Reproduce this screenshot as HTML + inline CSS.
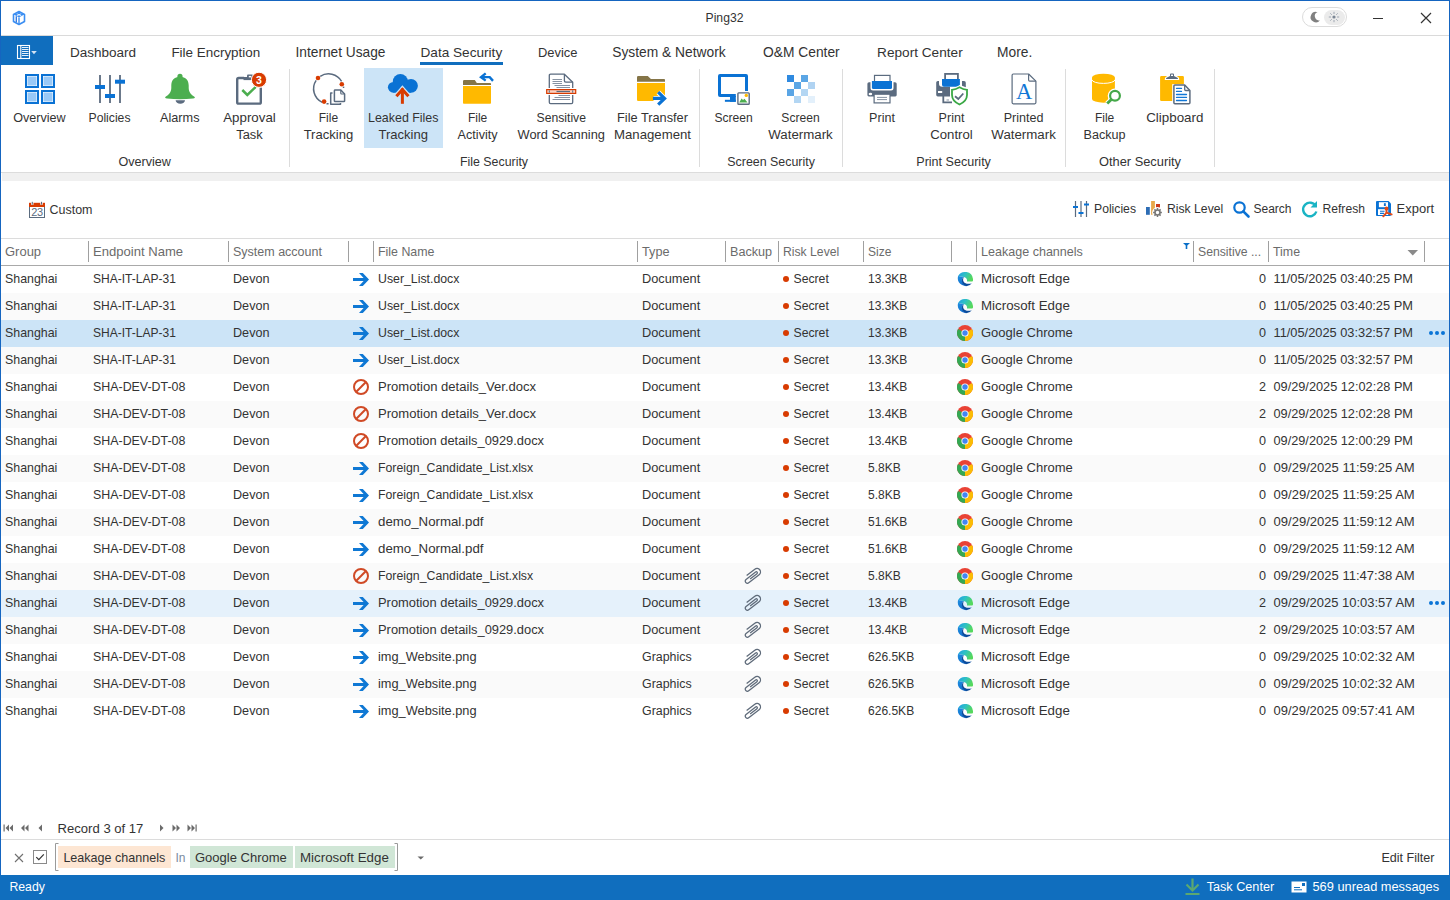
<!DOCTYPE html>
<html><head><meta charset="utf-8"><title>Ping32</title>
<style>
html,body{margin:0;padding:0;}
body{width:1450px;height:900px;overflow:hidden;position:relative;background:#fff;font-family:'Liberation Sans', sans-serif;}
.t{position:absolute;white-space:nowrap;}
.b{position:absolute;}
.i{position:absolute;overflow:visible;}
</style></head><body>

<svg class="i" style="left:12px;top:10px" width="14" height="16" viewBox="0 0 14 16"><path d="M1.8 4.6 L7 1.8 L12.2 4.6 L7 7.4 Z" fill="#3b8ef2"/><path d="M4.1 3.3 L9.5 6.1 M9.9 3.3 L4.5 6.1" stroke="#fff" stroke-width="0.8"/><path d="M7 1.5 L12.5 4.5 V11.5 L7 14.5 L1.5 11.5 V4.5 Z" fill="none" stroke="#3b8ef2" stroke-width="1.6" stroke-linejoin="round"/><path d="M7 7.4 V14.3" stroke="#3b8ef2" stroke-width="1.4"/><path d="M4.3 6.3 V12.2" stroke="#2f74dc" stroke-width="1.3"/></svg>
<div class="t" style="left:574.5px;width:300px;text-align:center;top:11.00px;font-size:12.17px;line-height:14px;color:#333;">Ping32</div>
<div class="b" style="left:1302px;top:7px;width:45px;height:20px;background:#fff;border:1px solid #dcdcdc;border-radius:11px;box-sizing:border-box;"></div>
<div class="b" style="left:1324px;top:10px;width:21px;height:15px;background:#ebebeb;border-radius:8px;"></div>
<svg class="i" style="left:1309px;top:11px" width="12" height="12" viewBox="0 0 12 12"><path d="M8.5 1.2 A5.2 5.2 0 1 0 11 9.2 A4.2 4.2 0 0 1 8.5 1.2 Z" fill="#808080"/></svg>
<svg class="i" style="left:1328px;top:11px" width="12" height="12" viewBox="0 0 12 12"><circle cx="6" cy="6" r="1.6" fill="#7b8694"/><g stroke="#8c96a3" stroke-width="0.8"><path d="M6 0.8V3 M6 9V11.2 M0.8 6H3 M9 6H11.2 M2.3 2.3L3.8 3.8 M8.2 8.2L9.7 9.7 M2.3 9.7L3.8 8.2 M8.2 3.8L9.7 2.3"/></g></svg>
<div class="b" style="left:1373px;top:18px;width:10px;height:1px;background:#333;"></div>
<svg class="i" style="left:1420px;top:12px" width="12" height="12" viewBox="0 0 12 12"><path d="M1 1 L11 11 M11 1 L1 11" stroke="#333" stroke-width="1.2"/></svg>
<div class="b" style="left:1px;top:35px;width:1448px;height:1px;background:#dadada;"></div>
<div class="b" style="left:0px;top:36px;width:53px;height:29px;background:#106ebe;"></div>
<svg class="i" style="left:16px;top:44px" width="22" height="16" viewBox="0 0 22 16"><rect x="1.5" y="1.5" width="12" height="13" fill="none" stroke="#fff" stroke-width="1.1"/><path d="M4.8 1.5 V14.5" stroke="#fff" stroke-width="1.1"/><g stroke="#fff" stroke-width="0.9"><path d="M6 3.5H12.5 M6 5.5H12.5 M6 7.5H12.5 M6 9.5H12.5 M6 11.5H12.5"/></g><path d="M15.2 7 H20.8 L18 10.2 Z" fill="#d5e3f3"/></svg>
<div class="t" style="left:70.0px;top:46.00px;font-size:13.53px;line-height:14px;color:#333;">Dashboard</div>
<div class="t" style="left:171.4px;top:46.00px;font-size:13.44px;line-height:14px;color:#333;">File Encryption</div>
<div class="t" style="left:295.5px;top:46.00px;font-size:13.72px;line-height:14px;color:#333;">Internet Usage</div>
<div class="t" style="left:420.5px;top:46.00px;font-size:13.61px;line-height:14px;color:#333;">Data Security</div>
<div class="t" style="left:538.0px;top:46.00px;font-size:12.92px;line-height:14px;color:#333;">Device</div>
<div class="t" style="left:612.2px;top:46.00px;font-size:13.8px;line-height:14px;color:#333;">System &amp; Network</div>
<div class="t" style="left:763.0px;top:46.00px;font-size:13.8px;line-height:14px;color:#333;">O&amp;M Center</div>
<div class="t" style="left:877.1px;top:46.00px;font-size:13.64px;line-height:14px;color:#333;">Report Center</div>
<div class="t" style="left:997.0px;top:46.00px;font-size:13.8px;line-height:14px;color:#333;">More.</div>
<div class="b" style="left:420px;top:62px;width:83px;height:3px;background:#106ebe;"></div>
<div class="b" style="left:364px;top:68px;width:79px;height:80px;background:#cce4f7;"></div>
<div class="b" style="left:289px;top:69px;width:1px;height:98px;background:#dcdcdc;"></div>
<div class="b" style="left:699px;top:69px;width:1px;height:98px;background:#dcdcdc;"></div>
<div class="b" style="left:842px;top:69px;width:1px;height:98px;background:#dcdcdc;"></div>
<div class="b" style="left:1065px;top:69px;width:1px;height:98px;background:#dcdcdc;"></div>
<div class="b" style="left:1214px;top:69px;width:1px;height:98px;background:#dcdcdc;"></div>
<div class="t" style="left:-110.5px;width:300px;text-align:center;top:111.00px;font-size:12.59px;line-height:14px;color:#333;">Overview</div>
<div class="t" style="left:-40.5px;width:300px;text-align:center;top:111.00px;font-size:12.19px;line-height:14px;color:#333;">Policies</div>
<div class="t" style="left:29.75px;width:300px;text-align:center;top:111.00px;font-size:12.7px;line-height:14px;color:#333;">Alarms</div>
<div class="t" style="left:99.5px;width:300px;text-align:center;top:111.00px;font-size:13.3px;line-height:14px;color:#333;">Approval</div>
<div class="t" style="left:99.5px;width:300px;text-align:center;top:128.00px;font-size:12.88px;line-height:14px;color:#333;">Task</div>
<div class="t" style="left:178.39999999999998px;width:300px;text-align:center;top:111.00px;font-size:12.0px;line-height:14px;color:#333;">File</div>
<div class="t" style="left:178.39999999999998px;width:300px;text-align:center;top:128.00px;font-size:13.04px;line-height:14px;color:#333;">Tracking</div>
<div class="t" style="left:253.25px;width:300px;text-align:center;top:111.00px;font-size:12.43px;line-height:14px;color:#333;">Leaked Files</div>
<div class="t" style="left:253.25px;width:300px;text-align:center;top:128.00px;font-size:13.04px;line-height:14px;color:#333;">Tracking</div>
<div class="t" style="left:327.6px;width:300px;text-align:center;top:111.00px;font-size:12.0px;line-height:14px;color:#333;">File</div>
<div class="t" style="left:327.6px;width:300px;text-align:center;top:128.00px;font-size:12.63px;line-height:14px;color:#333;">Activity</div>
<div class="t" style="left:411.25px;width:300px;text-align:center;top:111.00px;font-size:12.2px;line-height:14px;color:#333;">Sensitive</div>
<div class="t" style="left:411.25px;width:300px;text-align:center;top:128.00px;font-size:12.83px;line-height:14px;color:#333;">Word Scanning</div>
<div class="t" style="left:502.5px;width:300px;text-align:center;top:111.00px;font-size:12.78px;line-height:14px;color:#333;">File Transfer</div>
<div class="t" style="left:502.5px;width:300px;text-align:center;top:128.00px;font-size:13.19px;line-height:14px;color:#333;">Management</div>
<div class="t" style="left:583.6px;width:300px;text-align:center;top:111.00px;font-size:12.09px;line-height:14px;color:#333;">Screen</div>
<div class="t" style="left:650.5px;width:300px;text-align:center;top:111.00px;font-size:12.09px;line-height:14px;color:#333;">Screen</div>
<div class="t" style="left:650.5px;width:300px;text-align:center;top:128.00px;font-size:13.29px;line-height:14px;color:#333;">Watermark</div>
<div class="t" style="left:732px;width:300px;text-align:center;top:111.00px;font-size:12.55px;line-height:14px;color:#333;">Print</div>
<div class="t" style="left:801.5px;width:300px;text-align:center;top:111.00px;font-size:12.55px;line-height:14px;color:#333;">Print</div>
<div class="t" style="left:801.5px;width:300px;text-align:center;top:128.00px;font-size:13.18px;line-height:14px;color:#333;">Control</div>
<div class="t" style="left:873.6px;width:300px;text-align:center;top:111.00px;font-size:12.56px;line-height:14px;color:#333;">Printed</div>
<div class="t" style="left:873.6px;width:300px;text-align:center;top:128.00px;font-size:13.29px;line-height:14px;color:#333;">Watermark</div>
<div class="t" style="left:954.5999999999999px;width:300px;text-align:center;top:111.00px;font-size:12.0px;line-height:14px;color:#333;">File</div>
<div class="t" style="left:954.5999999999999px;width:300px;text-align:center;top:128.00px;font-size:12.62px;line-height:14px;color:#333;">Backup</div>
<div class="t" style="left:1024.8px;width:300px;text-align:center;top:111.00px;font-size:13.39px;line-height:14px;color:#333;">Clipboard</div>
<div class="t" style="left:-5.25px;width:300px;text-align:center;top:155.00px;font-size:12.59px;line-height:14px;color:#333;">Overview</div>
<div class="t" style="left:344px;width:300px;text-align:center;top:155.00px;font-size:12.36px;line-height:14px;color:#333;">File Security</div>
<div class="t" style="left:621.1px;width:300px;text-align:center;top:155.00px;font-size:12.41px;line-height:14px;color:#333;">Screen Security</div>
<div class="t" style="left:803.6px;width:300px;text-align:center;top:155.00px;font-size:12.56px;line-height:14px;color:#333;">Print Security</div>
<div class="t" style="left:990px;width:300px;text-align:center;top:155.00px;font-size:12.83px;line-height:14px;color:#333;">Other Security</div>
<svg class="i" style="left:25px;top:74px" width="30" height="30" viewBox="0 0 30 30"><rect x="1" y="1" width="12" height="12" fill="#fff" stroke="#0a72d4" stroke-width="2"/><rect x="2.5" y="2.5" width="9" height="9" fill="#99c9f7"/><rect x="1" y="17" width="12" height="12" fill="#fff" stroke="#0a72d4" stroke-width="2"/><rect x="2.5" y="18.5" width="9" height="9" fill="#99c9f7"/><rect x="17" y="1" width="12" height="12" fill="#fff" stroke="#0a72d4" stroke-width="2"/><rect x="18.5" y="2.5" width="9" height="9" fill="#99c9f7"/><rect x="17" y="17" width="12" height="12" fill="#fff" stroke="#0a72d4" stroke-width="2"/><rect x="18.5" y="18.5" width="9" height="9" fill="#99c9f7"/></svg>
<svg class="i" style="left:95px;top:75px" width="30" height="29" viewBox="0 0 30 29"><g stroke="#5b6b7f" stroke-width="1.8"><path d="M5 0V28 M15 0V28 M25 0V28"/></g><g fill="#0a72d4"><rect x="0" y="10" width="10" height="4"/><rect x="10" y="19" width="10" height="4"/><rect x="20" y="4.7" width="10" height="4"/></g></svg>
<svg class="i" style="left:165px;top:74px" width="30" height="30" viewBox="0 0 30 30"><circle cx="15" cy="2.4" r="2.6" fill="#4cae4f"/><path d="M15 2.8 C9 2.8 6.3 6.5 6.3 11.5 V14 C6.3 18.5 3.5 21 0 23.2 Q0.5 24.3 2 24.6 Q15 26 28 24.6 Q29.5 24.3 30 23.2 C26.5 21 23.7 18.5 23.7 14 V11.5 C23.7 6.5 21 2.8 15 2.8 Z" fill="#4cae4f"/><path d="M10.6 26.2 H20 A4.7 3.5 0 0 1 10.6 26.2 Z" fill="#5b6b7f"/></svg>
<svg class="i" style="left:235px;top:72px" width="34" height="34" viewBox="0 0 34 34"><path d="M9 6 H3.8 Q2.2 6 2.2 7.6 V30.2 Q2.2 31.6 3.6 31.6 H24.4 Q25.8 31.6 25.8 30.2 V15.5" fill="none" stroke="#5b6b7f" stroke-width="2.4"/><path d="M8.5 5 H20.5 V8.1 H8.5 Z" fill="#5b6b7f"/><path d="M12 6 V3.6 Q12 2.6 13 2.6 H17 Q18 2.6 18 3.6 V6 Z" fill="#5b6b7f"/><rect x="13.8" y="3.9" width="2.4" height="1.5" fill="#fff"/><path d="M7.3 18 L12.3 22.9 L20.8 14.8" fill="none" stroke="#4cae4f" stroke-width="2.5"/><circle cx="24" cy="7.8" r="7.6" fill="#d83b01" stroke="#fff" stroke-width="1"/><text x="24" y="11.5" font-size="10.5" font-weight="bold" fill="#fff" text-anchor="middle" font-family="Liberation Sans">3</text></svg>
<svg class="i" style="left:308px;top:68px" width="42" height="40" viewBox="0 0 42 40"><path d="M12.21 8.36 A15 15 0 0 1 33.59 13.30 M35.45 18.71 A15 15 0 0 1 35.60 20.54 M8.16 12.41 A15 15 0 0 0 14.26 34.39 M18.51 35.65 A15 15 0 0 0 20.60 35.80" fill="none" stroke="#5b6b7f" stroke-width="1.5"/><circle cx="10" cy="10" r="2.3" fill="#d83b01"/><circle cx="33.8" cy="16.2" r="2.3" fill="#d83b01"/><circle cx="16.1" cy="33.6" r="2.3" fill="#d83b01"/><rect x="21" y="20" width="20" height="20" fill="#fff"/><path d="M24.5 25 H22.7 V36.2 H32.5 V35" fill="none" stroke="#5b6b7f" stroke-width="1.5" stroke-linejoin="round"/><path d="M27.1 22 H32.8 L36.6 26 V32.9 Q36.6 33.6 35.9 33.6 H27.1 Q26.4 33.6 26.4 32.9 V22.7 Q26.4 22 27.1 22 Z" fill="#fff" stroke="#5b6b7f" stroke-width="1.5" stroke-linejoin="round"/><path d="M32.8 22 V25.3 Q32.8 26 33.5 26 H36.6" fill="none" stroke="#5b6b7f" stroke-width="1.2"/></svg>
<svg class="i" style="left:386px;top:72px" width="34" height="34" viewBox="0 0 34 34"><g fill="#0a72d4"><circle cx="14.4" cy="9.5" r="7.6"/><circle cx="25" cy="13.8" r="6.9"/><circle cx="7.3" cy="15.3" r="5.4"/><rect x="7.3" y="9.5" width="17.7" height="11.2"/></g><g fill="none" stroke="#cce4f7" stroke-width="5.5"><path d="M10.4 24.2 L16.4 17.4 L22.4 24.2 M16.4 17.6 V31.8"/></g><g fill="none" stroke="#d83b01" stroke-width="3"><path d="M10.4 24.2 L16.4 17.4 L22.4 24.2"/><path d="M16.4 16.5 V31.8"/></g></svg>
<svg class="i" style="left:462px;top:72px" width="34" height="34" viewBox="0 0 34 34"><path d="M1 9.2 Q1 8 2.2 8 H12.8 L14.8 11.1 H28.2 Q29 11.1 29 11.9 V12.9 H1 Z" fill="#857548"/><path d="M1 14 H29 V31 Q29 31.8 28.2 31.8 H1.8 Q1 31.8 1 31 Z" fill="#ffb900"/><path d="M23.7 1.4 L19 5.1 L23.7 8.6 M19 5.1 H27.7 L31 8.9" fill="none" stroke="#0a72d4" stroke-width="2.4"/></svg>
<svg class="i" style="left:545px;top:72px" width="34" height="34" viewBox="0 0 34 34"><path d="M4.3 3.5 Q4.3 2.2 5.6 2.2 H19.4 L27.7 10.2 V30.3 Q27.7 31.6 26.4 31.6 H5.6 Q4.3 31.6 4.3 30.3 Z" fill="#fff" stroke="#5b6b7f" stroke-width="1.3" stroke-linejoin="round"/><path d="M19.4 2.2 V8.8 Q19.4 10.2 20.8 10.2 H27.7" fill="none" stroke="#5b6b7f" stroke-width="1.3"/><g stroke="#8793a3" stroke-width="1"><path d="M7.5 7.5 H17 M7.5 9.5 H17 M7.5 11.5 H17 M9.5 13.5 H25 M11.5 15.5 H25 M13.5 23.5 H25 M9.5 25.5 H25 M7.5 27.5 H25"/></g><rect x="0.5" y="16" width="31" height="7" fill="#fff"/><rect x="1.7" y="17.6" width="29" height="3.8" fill="#fcd3c2" stroke="#d83b01" stroke-width="1.2"/><path d="M11.5 19.5 H25" stroke="#5b6b7f" stroke-width="1.2"/><path d="M4.3 18.3 V20.7 M27.7 18.3 V20.7" stroke="#5b6b7f" stroke-width="1"/></svg>
<svg class="i" style="left:636px;top:74px" width="34" height="34" viewBox="0 0 34 34"><path d="M1 3.2 Q1 2 2.2 2 H11.8 L14.9 5.1 H28.2 Q29 5.1 29 5.9 V7.8 H1 Z" fill="#857548"/><path d="M1 9.1 H29 V26.1 Q29 26.9 28.2 26.9 H1.8 Q1 26.9 1 26.1 Z" fill="#ffb900"/><g fill="none" stroke="#fff" stroke-width="5"><path d="M17.5 24.4 H28 M22.2 18.2 L28.6 24.4 L22.2 30.7"/></g><g fill="none" stroke="#0a72d4" stroke-width="3.2"><path d="M16.9 24.4 H28 M22.2 18.2 L28.6 24.4 L22.2 30.7"/></g></svg>
<svg class="i" style="left:716px;top:72px" width="36" height="36" viewBox="0 0 36 36"><path fill-rule="evenodd" fill="#0a72d4" d="M4 2 H30 Q32 2 32 4 V18.9 H29 V5 H5 V22 H19.8 V24.9 H4 Q2 24.9 2 22.9 V4 Q2 2 4 2 Z"/><rect x="14" y="24" width="5.8" height="5.8" fill="#0a72d4"/><rect x="8.9" y="27.8" width="10.9" height="2" fill="#0a72d4"/><rect x="21.9" y="20.9" width="11.3" height="11.3" rx="0.8" fill="#fff" stroke="#5b6b7f" stroke-width="1.4"/><path d="M23.2 30.5 L25.6 26.5 L27 28 L28.5 26.8 L31.5 30.5 Z" fill="#4cae4f"/><circle cx="30.3" cy="23.4" r="1.7" fill="#ffb900"/></svg>
<svg class="i" style="left:787px;top:75px" width="28" height="28" viewBox="0 0 28 28"><rect x="0" y="0" width="7" height="7" fill="#2f8ae0"/><rect x="14" y="0" width="7" height="7" fill="#5ba6e5"/><rect x="7" y="7" width="7" height="7" fill="#5ba6e5"/><rect x="21" y="7" width="7" height="7" fill="#b0d3f2"/><rect x="0" y="14" width="7" height="7" fill="#5aa5e5"/><rect x="14" y="14" width="7" height="7" fill="#b3d6f3"/><rect x="7" y="21" width="7" height="7" fill="#b3d6f3"/><rect x="21" y="21" width="7" height="7" fill="#e3f0fb"/></svg>
<svg class="i" style="left:866px;top:74px" width="32" height="31" viewBox="0 0 32 31"><rect x="8.5" y="1.4" width="15.5" height="8" fill="#fff" stroke="#5b6b7f" stroke-width="1.2"/><path d="M1.4 9.8 Q1.4 8.2 3 8.2 H4.5 V14 Q4.5 16.5 7 16.5 H25 Q27.5 16.5 27.5 14 V8.2 H29 Q30.7 8.2 30.7 9.8 V21 Q30.7 22.4 29.3 22.4 H2.8 Q1.4 22.4 1.4 21 Z" fill="#5b6b7f"/><path d="M5.9 6.9 H26 V13.4 Q26 14.9 24.5 14.9 H7.4 Q5.9 14.9 5.9 13.4 Z" fill="#0a72d4"/><ellipse cx="4.4" cy="20" rx="1.8" ry="1.3" fill="#fff"/><rect x="8.1" y="20.2" width="15.9" height="8.7" fill="#fff" stroke="#5b6b7f" stroke-width="1.2"/><path d="M11 23.4 H21 M11 25.6 H21" stroke="#8793a3" stroke-width="1"/></svg>
<svg class="i" style="left:935px;top:72px" width="34" height="34" viewBox="0 0 34 34"><rect x="10.1" y="1.9" width="12.8" height="7" fill="#fff" stroke="#5b6b7f" stroke-width="1.8"/><path d="M1.2 10.5 Q1.2 8.9 2.8 8.9 H4 V11.5 Q4 14.7 7.2 14.7 H15 V24.4 H2.8 Q1.2 24.4 1.2 22.8 Z" fill="#5b6b7f"/><path d="M27 8.9 H29 Q30.8 8.9 30.8 10.7 V15.3 L27 13.8 Z" fill="#5b6b7f"/><path d="M7 6.9 H24.9 V13 L22.5 14.7 H9 Q7 14.7 7 12.7 Z" fill="#0a72d4"/><rect x="3" y="19" width="4.2" height="2" fill="#fff"/><path d="M8.3 21 V30.4 H17" fill="none" stroke="#5b6b7f" stroke-width="1.8"/><path d="M11.5 28 H14" stroke="#8793a3" stroke-width="1"/><path d="M24.5 15.3 Q21 17.5 17 17.8 V23 Q17 29 24.5 32.5 Q32 29 32 23 V17.8 Q28 17.5 24.5 15.3 Z" fill="#fff" stroke="#fff" stroke-width="3.5"/><path d="M24.5 15.3 Q21 17.5 17 17.8 V23 Q17 29 24.5 32.5 Q32 29 32 23 V17.8 Q28 17.5 24.5 15.3 Z" fill="#fff" stroke="#3aa845" stroke-width="1.8"/><path d="M20 24.2 L23.3 27 L28.3 21.5" fill="none" stroke="#5b6b7f" stroke-width="1.8"/></svg>
<svg class="i" style="left:1010px;top:72px" width="30" height="34" viewBox="0 0 30 34"><path d="M2.1 3.2 Q2.1 2 3.3 2 H18.6 L25.9 9.1 V30.6 Q25.9 31.8 24.7 31.8 H3.3 Q2.1 31.8 2.1 30.6 Z" fill="#fff" stroke="#5b6b7f" stroke-width="1.2" stroke-linejoin="round"/><path d="M18.6 2 V7.9 Q18.6 9.1 19.8 9.1 H25.9" fill="none" stroke="#5b6b7f" stroke-width="1.2"/><text x="14" y="26.7" font-size="22.5" fill="#1177d6" text-anchor="middle" font-family="Liberation Serif">A</text></svg>
<svg class="i" style="left:1091px;top:72px" width="34" height="34" viewBox="0 0 34 34"><path d="M1 5.4 V27 A11.45 3.7 0 0 0 23.9 27 V5.4 Z" fill="#ffb900"/><ellipse cx="12.45" cy="5.4" rx="11.45" ry="3.6" fill="#ffb900"/><path d="M1 7.8 A11.45 3.6 0 0 0 23.9 7.8" fill="none" stroke="#fff" stroke-width="1"/><circle cx="24" cy="23.8" r="7.3" fill="#fff"/><path d="M20.6 27.2 L16.2 31.6" stroke="#fff" stroke-width="5"/><circle cx="24" cy="23.8" r="4.9" fill="#fff" stroke="#45a84a" stroke-width="2.2"/><path d="M20.6 27.2 L16.2 31.6" stroke="#45a84a" stroke-width="2.8"/></svg>
<svg class="i" style="left:1159px;top:72px" width="34" height="34" viewBox="0 0 34 34"><rect x="1.1" y="4" width="23.8" height="24.9" rx="1.2" fill="#ffb900"/><path d="M7 6.9 Q7 6 8 5.5 L11 4 V2.5 Q11 1.6 12 1.6 H14 Q15 1.6 15 2.5 V4 L18 5.5 Q19 6 19 6.9 Z" fill="#fff" stroke="#fff" stroke-width="2.4"/><path d="M7 6.9 Q7 6 8 5.5 L11 4 V2.5 Q11 1.6 12 1.6 H14 Q15 1.6 15 2.5 V4 L18 5.5 Q19 6 19 6.9 Z" fill="#5b6b7f"/><rect x="12" y="2.6" width="2" height="1.4" fill="#fff"/><rect x="13.2" y="12.1" width="18.7" height="20.7" fill="#fff"/><path d="M14.9 14.1 Q14.9 13.1 15.9 13.1 H25.7 L30.9 18.5 V30.8 Q30.9 31.8 29.9 31.8 H15.9 Q14.9 31.8 14.9 30.8 Z" fill="#fff" stroke="#5b6b7f" stroke-width="1.5" stroke-linejoin="round"/><path d="M25.7 13.1 V17.5 Q25.7 18.5 26.7 18.5 H30.9" fill="none" stroke="#5b6b7f" stroke-width="1.3"/><g stroke="#1177d6" stroke-width="1.3" stroke-linecap="round"><path d="M17.5 16.4 H22.5 M17.5 19.4 H22.5 M17.5 22.5 H27.5 M17.5 25.4 H27.5 M17.5 28.5 H27.5"/></g></svg>
<div class="b" style="left:1px;top:172px;width:1448px;height:1px;background:#dcdcdc;"></div>
<div class="b" style="left:2px;top:173px;width:1447px;height:8px;background:#f0f0f0;"></div>
<svg class="i" style="left:28px;top:200px" width="18" height="19" viewBox="0 0 18 19"><rect x="1.5" y="3.5" width="15" height="14" fill="#fff" stroke="#5b6b7f" stroke-width="1"/><rect x="1" y="2.8" width="16" height="4.2" fill="#d83b01"/><rect x="3.1" y="2.2" width="2.4" height="2.6" fill="#fff"/><rect x="12.3" y="2.2" width="2.4" height="2.6" fill="#fff"/><path d="M4.3 1.8V4.6 M13.5 1.8V4.6" stroke="#5b6b7f" stroke-width="1"/><text x="9.1" y="15.9" font-size="11" fill="#5b6b7f" text-anchor="middle" font-family="Liberation Sans" letter-spacing="-0.3">23</text></svg>
<svg class="i" style="left:1073px;top:201px" width="16" height="16" viewBox="0 0 16 16"><g stroke="#5b6b7f" stroke-width="1.2"><path d="M2.5 0V16 M8 0V16 M13.5 0V16"/></g><g fill="#0a72d4"><rect x="0" y="5" width="5" height="2"/><rect x="5.5" y="11" width="5" height="2"/><rect x="11" y="2.5" width="5" height="2"/></g></svg>
<svg class="i" style="left:1146px;top:200px" width="17" height="18" viewBox="0 0 17 18"><rect x="0" y="7" width="3.8" height="7.8" fill="#2d6db5"/><rect x="5.1" y="1" width="3.8" height="13.8" fill="#e8a94a"/><rect x="10" y="4" width="4" height="3.8" fill="#cc3a1a"/><circle cx="11.5" cy="12.5" r="5.4" fill="#fff"/><path d="M13.90 12.50 L15.90 12.50 M13.20 14.20 L14.61 15.61 M11.50 14.90 L11.50 16.90 M9.80 14.20 L8.39 15.61 M9.10 12.50 L7.10 12.50 M9.80 10.80 L8.39 9.39 M11.50 10.10 L11.50 8.10 M13.20 10.80 L14.61 9.39" stroke="#777" stroke-width="1.5"/><circle cx="11.5" cy="12.5" r="2.5" fill="#fff" stroke="#777" stroke-width="1.6"/></svg>
<svg class="i" style="left:1233px;top:201px" width="17" height="17" viewBox="0 0 17 17"><circle cx="6.5" cy="6.5" r="5.2" fill="none" stroke="#0a72d4" stroke-width="2.2"/><path d="M10.3 10.3 L15.5 15.5" stroke="#0a72d4" stroke-width="2.6" stroke-linecap="round"/></svg>
<svg class="i" style="left:1301px;top:200px" width="18" height="18" viewBox="0 0 18 18"><path d="M14.8 6 A6.8 6.8 0 1 0 15.4 11.5" fill="none" stroke="#1ab4c4" stroke-width="2.4"/><path d="M16 1 V7.5 H9.5 Z" fill="#1ab4c4"/></svg>
<svg class="i" style="left:1376px;top:201px" width="18" height="18" viewBox="0 0 18 18"><path d="M0 1 Q0 0 1 0 H12.5 L15 2.5 V14 Q15 15 14 15 H1 Q0 15 0 14 Z" fill="#0a72d4"/><rect x="2.9" y="1.2" width="9.1" height="5" fill="#fff"/><rect x="7.9" y="2.2" width="1.9" height="2.8" fill="#0a72d4"/><rect x="2" y="8.2" width="10.2" height="5.8" fill="#fff"/><path d="M4 10.3 H8.6 M4 12.4 H8" stroke="#0a72d4" stroke-width="1.1"/><g stroke="#e04a1a" stroke-width="2" fill="none" stroke-linecap="round"><path d="M10.5 8.3 V11.6 L7.3 15.3 M10.5 11.6 L15.6 13.4"/><circle cx="10.5" cy="7.6" r="1"/></g></svg>
<div class="t" style="left:49.5px;top:203.00px;font-size:12.48px;line-height:14px;color:#333;">Custom</div>
<div class="t" style="left:1094.0px;top:202.00px;font-size:12.19px;line-height:14px;color:#333;">Policies</div>
<div class="t" style="left:1167.0px;top:202.00px;font-size:12.2px;line-height:14px;color:#333;">Risk Level</div>
<div class="t" style="left:1253.5px;top:202.00px;font-size:12.0px;line-height:14px;color:#333;">Search</div>
<div class="t" style="left:1322.5px;top:202.00px;font-size:12.14px;line-height:14px;color:#333;">Refresh</div>
<div class="t" style="left:1396.6px;top:202.00px;font-size:12.98px;line-height:14px;color:#333;">Export</div>
<div class="b" style="left:1px;top:238px;width:1448px;height:1px;background:#dcdcdc;"></div>
<div class="b" style="left:1px;top:265px;width:1448px;height:1px;background:#a9a9a9;"></div>
<div class="b" style="left:88px;top:241px;width:1px;height:21px;background:#a0a0a0;"></div>
<div class="b" style="left:228px;top:241px;width:1px;height:21px;background:#a0a0a0;"></div>
<div class="b" style="left:348px;top:241px;width:1px;height:21px;background:#a0a0a0;"></div>
<div class="b" style="left:373px;top:241px;width:1px;height:21px;background:#a0a0a0;"></div>
<div class="b" style="left:637px;top:241px;width:1px;height:21px;background:#a0a0a0;"></div>
<div class="b" style="left:725px;top:241px;width:1px;height:21px;background:#a0a0a0;"></div>
<div class="b" style="left:778px;top:241px;width:1px;height:21px;background:#a0a0a0;"></div>
<div class="b" style="left:863px;top:241px;width:1px;height:21px;background:#a0a0a0;"></div>
<div class="b" style="left:951px;top:241px;width:1px;height:21px;background:#a0a0a0;"></div>
<div class="b" style="left:976px;top:241px;width:1px;height:21px;background:#a0a0a0;"></div>
<div class="b" style="left:1193px;top:241px;width:1px;height:21px;background:#a0a0a0;"></div>
<div class="b" style="left:1268px;top:241px;width:1px;height:21px;background:#a0a0a0;"></div>
<div class="b" style="left:1424px;top:241px;width:1px;height:21px;background:#a0a0a0;"></div>
<div class="t" style="left:5.0px;top:245.00px;font-size:12.99px;line-height:14px;color:#6b6b6b;">Group</div>
<div class="t" style="left:93.0px;top:245.00px;font-size:13.07px;line-height:14px;color:#6b6b6b;">Endpoint Name</div>
<div class="t" style="left:233.0px;top:245.00px;font-size:12.5px;line-height:14px;color:#6b6b6b;">System account</div>
<div class="t" style="left:378.0px;top:245.00px;font-size:12.4px;line-height:14px;color:#6b6b6b;">File Name</div>
<div class="t" style="left:642.0px;top:245.00px;font-size:12.68px;line-height:14px;color:#6b6b6b;">Type</div>
<div class="t" style="left:730.0px;top:245.00px;font-size:12.62px;line-height:14px;color:#6b6b6b;">Backup</div>
<div class="t" style="left:783.0px;top:245.00px;font-size:12.2px;line-height:14px;color:#6b6b6b;">Risk Level</div>
<div class="t" style="left:868.0px;top:245.00px;font-size:12.0px;line-height:14px;color:#6b6b6b;">Size</div>
<div class="t" style="left:981.0px;top:245.00px;font-size:12.56px;line-height:14px;color:#6b6b6b;">Leakage channels</div>
<div class="t" style="left:1198.0px;top:245.00px;font-size:12.21px;line-height:14px;color:#6b6b6b;">Sensitive ...</div>
<div class="t" style="left:1273.0px;top:245.00px;font-size:12.4px;line-height:14px;color:#6b6b6b;">Time</div>
<svg class="i" style="left:1183px;top:243px" width="7" height="6" viewBox="0 0 7 6"><path d="M0 0 H7 L4.3 2.6 V6 H2.7 V2.6 Z" fill="#0a6fc8"/></svg>
<svg class="i" style="left:1407px;top:250px" width="12" height="6" viewBox="0 0 12 6"><path d="M0.5 0 H11 L5.75 5.5 Z" fill="#8a8a8a"/></svg>
<div class="t" style="left:5.0px;top:272.00px;font-size:12.38px;line-height:14px;color:#333;">Shanghai</div>
<div class="t" style="left:93.0px;top:272.00px;font-size:12.04px;line-height:14px;color:#333;">SHA-IT-LAP-31</div>
<div class="t" style="left:233.0px;top:272.00px;font-size:12.63px;line-height:14px;color:#333;">Devon</div>
<svg class="i" style="left:353px;top:271px" width="16" height="16"><use href="#arrow"/></svg>
<div class="t" style="left:378.0px;top:272.00px;font-size:12.32px;line-height:14px;color:#333;">User_List.docx</div>
<div class="t" style="left:642.0px;top:272.00px;font-size:12.79px;line-height:14px;color:#333;">Document</div>
<div class="b" style="left:783px;top:276px;width:6px;height:6px;background:#d83b01;border-radius:50%;"></div>
<div class="t" style="left:793.5px;top:272.00px;font-size:12.21px;line-height:14px;color:#333;">Secret</div>
<div class="t" style="left:868.0px;top:272.00px;font-size:12.0px;line-height:14px;color:#333;">13.3KB</div>
<svg class="i" style="left:957px;top:271px" width="16" height="16"><use href="#edge"/></svg>
<div class="t" style="left:981.0px;top:272.00px;font-size:13.32px;line-height:14px;color:#333;">Microsoft Edge</div>
<div class="t" style="left:966px;width:300px;text-align:right;top:272.00px;font-size:12.6px;line-height:14px;color:#333;">0</div>
<div class="t" style="left:1273.5px;top:272.00px;font-size:12.82px;line-height:14px;color:#333;">11/05/2025 03:40:25 PM</div>
<div class="b" style="left:1px;top:293px;width:1448px;height:27px;background:#fafafa;"></div>
<div class="t" style="left:5.0px;top:299.00px;font-size:12.38px;line-height:14px;color:#333;">Shanghai</div>
<div class="t" style="left:93.0px;top:299.00px;font-size:12.04px;line-height:14px;color:#333;">SHA-IT-LAP-31</div>
<div class="t" style="left:233.0px;top:299.00px;font-size:12.63px;line-height:14px;color:#333;">Devon</div>
<svg class="i" style="left:353px;top:298px" width="16" height="16"><use href="#arrow"/></svg>
<div class="t" style="left:378.0px;top:299.00px;font-size:12.32px;line-height:14px;color:#333;">User_List.docx</div>
<div class="t" style="left:642.0px;top:299.00px;font-size:12.79px;line-height:14px;color:#333;">Document</div>
<div class="b" style="left:783px;top:303px;width:6px;height:6px;background:#d83b01;border-radius:50%;"></div>
<div class="t" style="left:793.5px;top:299.00px;font-size:12.21px;line-height:14px;color:#333;">Secret</div>
<div class="t" style="left:868.0px;top:299.00px;font-size:12.0px;line-height:14px;color:#333;">13.3KB</div>
<svg class="i" style="left:957px;top:298px" width="16" height="16"><use href="#edge"/></svg>
<div class="t" style="left:981.0px;top:299.00px;font-size:13.32px;line-height:14px;color:#333;">Microsoft Edge</div>
<div class="t" style="left:966px;width:300px;text-align:right;top:299.00px;font-size:12.6px;line-height:14px;color:#333;">0</div>
<div class="t" style="left:1273.5px;top:299.00px;font-size:12.82px;line-height:14px;color:#333;">11/05/2025 03:40:25 PM</div>
<div class="b" style="left:1px;top:320px;width:1448px;height:27px;background:#cce4f7;"></div>
<div class="t" style="left:5.0px;top:326.00px;font-size:12.38px;line-height:14px;color:#333;">Shanghai</div>
<div class="t" style="left:93.0px;top:326.00px;font-size:12.04px;line-height:14px;color:#333;">SHA-IT-LAP-31</div>
<div class="t" style="left:233.0px;top:326.00px;font-size:12.63px;line-height:14px;color:#333;">Devon</div>
<svg class="i" style="left:353px;top:325px" width="16" height="16"><use href="#arrow"/></svg>
<div class="t" style="left:378.0px;top:326.00px;font-size:12.32px;line-height:14px;color:#333;">User_List.docx</div>
<div class="t" style="left:642.0px;top:326.00px;font-size:12.79px;line-height:14px;color:#333;">Document</div>
<div class="b" style="left:783px;top:330px;width:6px;height:6px;background:#d83b01;border-radius:50%;"></div>
<div class="t" style="left:793.5px;top:326.00px;font-size:12.21px;line-height:14px;color:#333;">Secret</div>
<div class="t" style="left:868.0px;top:326.00px;font-size:12.0px;line-height:14px;color:#333;">13.3KB</div>
<svg class="i" style="left:957px;top:325px" width="16" height="16"><use href="#chrome"/></svg>
<div class="t" style="left:981.0px;top:326.00px;font-size:13.0px;line-height:14px;color:#333;">Google Chrome</div>
<div class="t" style="left:966px;width:300px;text-align:right;top:326.00px;font-size:12.6px;line-height:14px;color:#333;">0</div>
<div class="t" style="left:1273.5px;top:326.00px;font-size:12.82px;line-height:14px;color:#333;">11/05/2025 03:32:57 PM</div>
<div class="b" style="left:1429px;top:331px;width:4px;height:4px;background:#0a74d6;border-radius:50%;"></div>
<div class="b" style="left:1435px;top:331px;width:4px;height:4px;background:#0a74d6;border-radius:50%;"></div>
<div class="b" style="left:1441px;top:331px;width:4px;height:4px;background:#0a74d6;border-radius:50%;"></div>
<div class="b" style="left:1px;top:347px;width:1448px;height:27px;background:#fafafa;"></div>
<div class="t" style="left:5.0px;top:353.00px;font-size:12.38px;line-height:14px;color:#333;">Shanghai</div>
<div class="t" style="left:93.0px;top:353.00px;font-size:12.04px;line-height:14px;color:#333;">SHA-IT-LAP-31</div>
<div class="t" style="left:233.0px;top:353.00px;font-size:12.63px;line-height:14px;color:#333;">Devon</div>
<svg class="i" style="left:353px;top:352px" width="16" height="16"><use href="#arrow"/></svg>
<div class="t" style="left:378.0px;top:353.00px;font-size:12.32px;line-height:14px;color:#333;">User_List.docx</div>
<div class="t" style="left:642.0px;top:353.00px;font-size:12.79px;line-height:14px;color:#333;">Document</div>
<div class="b" style="left:783px;top:357px;width:6px;height:6px;background:#d83b01;border-radius:50%;"></div>
<div class="t" style="left:793.5px;top:353.00px;font-size:12.21px;line-height:14px;color:#333;">Secret</div>
<div class="t" style="left:868.0px;top:353.00px;font-size:12.0px;line-height:14px;color:#333;">13.3KB</div>
<svg class="i" style="left:957px;top:352px" width="16" height="16"><use href="#chrome"/></svg>
<div class="t" style="left:981.0px;top:353.00px;font-size:13.0px;line-height:14px;color:#333;">Google Chrome</div>
<div class="t" style="left:966px;width:300px;text-align:right;top:353.00px;font-size:12.6px;line-height:14px;color:#333;">0</div>
<div class="t" style="left:1273.5px;top:353.00px;font-size:12.82px;line-height:14px;color:#333;">11/05/2025 03:32:57 PM</div>
<div class="t" style="left:5.0px;top:380.00px;font-size:12.38px;line-height:14px;color:#333;">Shanghai</div>
<div class="t" style="left:93.0px;top:380.00px;font-size:12.41px;line-height:14px;color:#333;">SHA-DEV-DT-08</div>
<div class="t" style="left:233.0px;top:380.00px;font-size:12.63px;line-height:14px;color:#333;">Devon</div>
<svg class="i" style="left:353px;top:379px" width="16" height="16"><use href="#ban"/></svg>
<div class="t" style="left:378.0px;top:380.00px;font-size:13.05px;line-height:14px;color:#333;">Promotion details_Ver.docx</div>
<div class="t" style="left:642.0px;top:380.00px;font-size:12.79px;line-height:14px;color:#333;">Document</div>
<div class="b" style="left:783px;top:384px;width:6px;height:6px;background:#d83b01;border-radius:50%;"></div>
<div class="t" style="left:793.5px;top:380.00px;font-size:12.21px;line-height:14px;color:#333;">Secret</div>
<div class="t" style="left:868.0px;top:380.00px;font-size:12.0px;line-height:14px;color:#333;">13.4KB</div>
<svg class="i" style="left:957px;top:379px" width="16" height="16"><use href="#chrome"/></svg>
<div class="t" style="left:981.0px;top:380.00px;font-size:13.0px;line-height:14px;color:#333;">Google Chrome</div>
<div class="t" style="left:966px;width:300px;text-align:right;top:380.00px;font-size:12.6px;line-height:14px;color:#333;">2</div>
<div class="t" style="left:1273.5px;top:380.00px;font-size:12.74px;line-height:14px;color:#333;">09/29/2025 12:02:28 PM</div>
<div class="b" style="left:1px;top:401px;width:1448px;height:27px;background:#fafafa;"></div>
<div class="t" style="left:5.0px;top:407.00px;font-size:12.38px;line-height:14px;color:#333;">Shanghai</div>
<div class="t" style="left:93.0px;top:407.00px;font-size:12.41px;line-height:14px;color:#333;">SHA-DEV-DT-08</div>
<div class="t" style="left:233.0px;top:407.00px;font-size:12.63px;line-height:14px;color:#333;">Devon</div>
<svg class="i" style="left:353px;top:406px" width="16" height="16"><use href="#ban"/></svg>
<div class="t" style="left:378.0px;top:407.00px;font-size:13.05px;line-height:14px;color:#333;">Promotion details_Ver.docx</div>
<div class="t" style="left:642.0px;top:407.00px;font-size:12.79px;line-height:14px;color:#333;">Document</div>
<div class="b" style="left:783px;top:411px;width:6px;height:6px;background:#d83b01;border-radius:50%;"></div>
<div class="t" style="left:793.5px;top:407.00px;font-size:12.21px;line-height:14px;color:#333;">Secret</div>
<div class="t" style="left:868.0px;top:407.00px;font-size:12.0px;line-height:14px;color:#333;">13.4KB</div>
<svg class="i" style="left:957px;top:406px" width="16" height="16"><use href="#chrome"/></svg>
<div class="t" style="left:981.0px;top:407.00px;font-size:13.0px;line-height:14px;color:#333;">Google Chrome</div>
<div class="t" style="left:966px;width:300px;text-align:right;top:407.00px;font-size:12.6px;line-height:14px;color:#333;">2</div>
<div class="t" style="left:1273.5px;top:407.00px;font-size:12.74px;line-height:14px;color:#333;">09/29/2025 12:02:28 PM</div>
<div class="t" style="left:5.0px;top:434.00px;font-size:12.38px;line-height:14px;color:#333;">Shanghai</div>
<div class="t" style="left:93.0px;top:434.00px;font-size:12.41px;line-height:14px;color:#333;">SHA-DEV-DT-08</div>
<div class="t" style="left:233.0px;top:434.00px;font-size:12.63px;line-height:14px;color:#333;">Devon</div>
<svg class="i" style="left:353px;top:433px" width="16" height="16"><use href="#ban"/></svg>
<div class="t" style="left:378.0px;top:434.00px;font-size:12.89px;line-height:14px;color:#333;">Promotion details_0929.docx</div>
<div class="t" style="left:642.0px;top:434.00px;font-size:12.79px;line-height:14px;color:#333;">Document</div>
<div class="b" style="left:783px;top:438px;width:6px;height:6px;background:#d83b01;border-radius:50%;"></div>
<div class="t" style="left:793.5px;top:434.00px;font-size:12.21px;line-height:14px;color:#333;">Secret</div>
<div class="t" style="left:868.0px;top:434.00px;font-size:12.0px;line-height:14px;color:#333;">13.4KB</div>
<svg class="i" style="left:957px;top:433px" width="16" height="16"><use href="#chrome"/></svg>
<div class="t" style="left:981.0px;top:434.00px;font-size:13.0px;line-height:14px;color:#333;">Google Chrome</div>
<div class="t" style="left:966px;width:300px;text-align:right;top:434.00px;font-size:12.6px;line-height:14px;color:#333;">0</div>
<div class="t" style="left:1273.5px;top:434.00px;font-size:12.74px;line-height:14px;color:#333;">09/29/2025 12:00:29 PM</div>
<div class="b" style="left:1px;top:455px;width:1448px;height:27px;background:#fafafa;"></div>
<div class="t" style="left:5.0px;top:461.00px;font-size:12.38px;line-height:14px;color:#333;">Shanghai</div>
<div class="t" style="left:93.0px;top:461.00px;font-size:12.41px;line-height:14px;color:#333;">SHA-DEV-DT-08</div>
<div class="t" style="left:233.0px;top:461.00px;font-size:12.63px;line-height:14px;color:#333;">Devon</div>
<svg class="i" style="left:353px;top:460px" width="16" height="16"><use href="#arrow"/></svg>
<div class="t" style="left:378.0px;top:461.00px;font-size:12.3px;line-height:14px;color:#333;">Foreign_Candidate_List.xlsx</div>
<div class="t" style="left:642.0px;top:461.00px;font-size:12.79px;line-height:14px;color:#333;">Document</div>
<div class="b" style="left:783px;top:465px;width:6px;height:6px;background:#d83b01;border-radius:50%;"></div>
<div class="t" style="left:793.5px;top:461.00px;font-size:12.21px;line-height:14px;color:#333;">Secret</div>
<div class="t" style="left:868.0px;top:461.00px;font-size:12.0px;line-height:14px;color:#333;">5.8KB</div>
<svg class="i" style="left:957px;top:460px" width="16" height="16"><use href="#chrome"/></svg>
<div class="t" style="left:981.0px;top:461.00px;font-size:13.0px;line-height:14px;color:#333;">Google Chrome</div>
<div class="t" style="left:966px;width:300px;text-align:right;top:461.00px;font-size:12.6px;line-height:14px;color:#333;">0</div>
<div class="t" style="left:1273.5px;top:461.00px;font-size:13.05px;line-height:14px;color:#333;">09/29/2025 11:59:25 AM</div>
<div class="t" style="left:5.0px;top:488.00px;font-size:12.38px;line-height:14px;color:#333;">Shanghai</div>
<div class="t" style="left:93.0px;top:488.00px;font-size:12.41px;line-height:14px;color:#333;">SHA-DEV-DT-08</div>
<div class="t" style="left:233.0px;top:488.00px;font-size:12.63px;line-height:14px;color:#333;">Devon</div>
<svg class="i" style="left:353px;top:487px" width="16" height="16"><use href="#arrow"/></svg>
<div class="t" style="left:378.0px;top:488.00px;font-size:12.3px;line-height:14px;color:#333;">Foreign_Candidate_List.xlsx</div>
<div class="t" style="left:642.0px;top:488.00px;font-size:12.79px;line-height:14px;color:#333;">Document</div>
<div class="b" style="left:783px;top:492px;width:6px;height:6px;background:#d83b01;border-radius:50%;"></div>
<div class="t" style="left:793.5px;top:488.00px;font-size:12.21px;line-height:14px;color:#333;">Secret</div>
<div class="t" style="left:868.0px;top:488.00px;font-size:12.0px;line-height:14px;color:#333;">5.8KB</div>
<svg class="i" style="left:957px;top:487px" width="16" height="16"><use href="#chrome"/></svg>
<div class="t" style="left:981.0px;top:488.00px;font-size:13.0px;line-height:14px;color:#333;">Google Chrome</div>
<div class="t" style="left:966px;width:300px;text-align:right;top:488.00px;font-size:12.6px;line-height:14px;color:#333;">0</div>
<div class="t" style="left:1273.5px;top:488.00px;font-size:13.05px;line-height:14px;color:#333;">09/29/2025 11:59:25 AM</div>
<div class="b" style="left:1px;top:509px;width:1448px;height:27px;background:#fafafa;"></div>
<div class="t" style="left:5.0px;top:515.00px;font-size:12.38px;line-height:14px;color:#333;">Shanghai</div>
<div class="t" style="left:93.0px;top:515.00px;font-size:12.41px;line-height:14px;color:#333;">SHA-DEV-DT-08</div>
<div class="t" style="left:233.0px;top:515.00px;font-size:12.63px;line-height:14px;color:#333;">Devon</div>
<svg class="i" style="left:353px;top:514px" width="16" height="16"><use href="#arrow"/></svg>
<div class="t" style="left:378.0px;top:515.00px;font-size:13.27px;line-height:14px;color:#333;">demo_Normal.pdf</div>
<div class="t" style="left:642.0px;top:515.00px;font-size:12.79px;line-height:14px;color:#333;">Document</div>
<div class="b" style="left:783px;top:519px;width:6px;height:6px;background:#d83b01;border-radius:50%;"></div>
<div class="t" style="left:793.5px;top:515.00px;font-size:12.21px;line-height:14px;color:#333;">Secret</div>
<div class="t" style="left:868.0px;top:515.00px;font-size:12.0px;line-height:14px;color:#333;">51.6KB</div>
<svg class="i" style="left:957px;top:514px" width="16" height="16"><use href="#chrome"/></svg>
<div class="t" style="left:981.0px;top:515.00px;font-size:13.0px;line-height:14px;color:#333;">Google Chrome</div>
<div class="t" style="left:966px;width:300px;text-align:right;top:515.00px;font-size:12.6px;line-height:14px;color:#333;">0</div>
<div class="t" style="left:1273.5px;top:515.00px;font-size:13.05px;line-height:14px;color:#333;">09/29/2025 11:59:12 AM</div>
<div class="t" style="left:5.0px;top:542.00px;font-size:12.38px;line-height:14px;color:#333;">Shanghai</div>
<div class="t" style="left:93.0px;top:542.00px;font-size:12.41px;line-height:14px;color:#333;">SHA-DEV-DT-08</div>
<div class="t" style="left:233.0px;top:542.00px;font-size:12.63px;line-height:14px;color:#333;">Devon</div>
<svg class="i" style="left:353px;top:541px" width="16" height="16"><use href="#arrow"/></svg>
<div class="t" style="left:378.0px;top:542.00px;font-size:13.27px;line-height:14px;color:#333;">demo_Normal.pdf</div>
<div class="t" style="left:642.0px;top:542.00px;font-size:12.79px;line-height:14px;color:#333;">Document</div>
<div class="b" style="left:783px;top:546px;width:6px;height:6px;background:#d83b01;border-radius:50%;"></div>
<div class="t" style="left:793.5px;top:542.00px;font-size:12.21px;line-height:14px;color:#333;">Secret</div>
<div class="t" style="left:868.0px;top:542.00px;font-size:12.0px;line-height:14px;color:#333;">51.6KB</div>
<svg class="i" style="left:957px;top:541px" width="16" height="16"><use href="#chrome"/></svg>
<div class="t" style="left:981.0px;top:542.00px;font-size:13.0px;line-height:14px;color:#333;">Google Chrome</div>
<div class="t" style="left:966px;width:300px;text-align:right;top:542.00px;font-size:12.6px;line-height:14px;color:#333;">0</div>
<div class="t" style="left:1273.5px;top:542.00px;font-size:13.05px;line-height:14px;color:#333;">09/29/2025 11:59:12 AM</div>
<div class="b" style="left:1px;top:563px;width:1448px;height:27px;background:#fafafa;"></div>
<div class="t" style="left:5.0px;top:569.00px;font-size:12.38px;line-height:14px;color:#333;">Shanghai</div>
<div class="t" style="left:93.0px;top:569.00px;font-size:12.41px;line-height:14px;color:#333;">SHA-DEV-DT-08</div>
<div class="t" style="left:233.0px;top:569.00px;font-size:12.63px;line-height:14px;color:#333;">Devon</div>
<svg class="i" style="left:353px;top:568px" width="16" height="16"><use href="#ban"/></svg>
<div class="t" style="left:378.0px;top:569.00px;font-size:12.3px;line-height:14px;color:#333;">Foreign_Candidate_List.xlsx</div>
<div class="t" style="left:642.0px;top:569.00px;font-size:12.79px;line-height:14px;color:#333;">Document</div>
<svg class="i" style="left:740px;top:565px" width="26" height="22"><use href="#clip"/></svg>
<div class="b" style="left:783px;top:573px;width:6px;height:6px;background:#d83b01;border-radius:50%;"></div>
<div class="t" style="left:793.5px;top:569.00px;font-size:12.21px;line-height:14px;color:#333;">Secret</div>
<div class="t" style="left:868.0px;top:569.00px;font-size:12.0px;line-height:14px;color:#333;">5.8KB</div>
<svg class="i" style="left:957px;top:568px" width="16" height="16"><use href="#chrome"/></svg>
<div class="t" style="left:981.0px;top:569.00px;font-size:13.0px;line-height:14px;color:#333;">Google Chrome</div>
<div class="t" style="left:966px;width:300px;text-align:right;top:569.00px;font-size:12.6px;line-height:14px;color:#333;">0</div>
<div class="t" style="left:1273.5px;top:569.00px;font-size:13.05px;line-height:14px;color:#333;">09/29/2025 11:47:38 AM</div>
<div class="b" style="left:1px;top:590px;width:1448px;height:27px;background:#e5f1fb;"></div>
<div class="t" style="left:5.0px;top:596.00px;font-size:12.38px;line-height:14px;color:#333;">Shanghai</div>
<div class="t" style="left:93.0px;top:596.00px;font-size:12.41px;line-height:14px;color:#333;">SHA-DEV-DT-08</div>
<div class="t" style="left:233.0px;top:596.00px;font-size:12.63px;line-height:14px;color:#333;">Devon</div>
<svg class="i" style="left:353px;top:595px" width="16" height="16"><use href="#arrow"/></svg>
<div class="t" style="left:378.0px;top:596.00px;font-size:12.89px;line-height:14px;color:#333;">Promotion details_0929.docx</div>
<div class="t" style="left:642.0px;top:596.00px;font-size:12.79px;line-height:14px;color:#333;">Document</div>
<svg class="i" style="left:740px;top:592px" width="26" height="22"><use href="#clip"/></svg>
<div class="b" style="left:783px;top:600px;width:6px;height:6px;background:#d83b01;border-radius:50%;"></div>
<div class="t" style="left:793.5px;top:596.00px;font-size:12.21px;line-height:14px;color:#333;">Secret</div>
<div class="t" style="left:868.0px;top:596.00px;font-size:12.0px;line-height:14px;color:#333;">13.4KB</div>
<svg class="i" style="left:957px;top:595px" width="16" height="16"><use href="#edge"/></svg>
<div class="t" style="left:981.0px;top:596.00px;font-size:13.32px;line-height:14px;color:#333;">Microsoft Edge</div>
<div class="t" style="left:966px;width:300px;text-align:right;top:596.00px;font-size:12.6px;line-height:14px;color:#333;">2</div>
<div class="t" style="left:1273.5px;top:596.00px;font-size:12.97px;line-height:14px;color:#333;">09/29/2025 10:03:57 AM</div>
<div class="b" style="left:1429px;top:601px;width:4px;height:4px;background:#0a74d6;border-radius:50%;"></div>
<div class="b" style="left:1435px;top:601px;width:4px;height:4px;background:#0a74d6;border-radius:50%;"></div>
<div class="b" style="left:1441px;top:601px;width:4px;height:4px;background:#0a74d6;border-radius:50%;"></div>
<div class="b" style="left:1px;top:617px;width:1448px;height:27px;background:#fafafa;"></div>
<div class="t" style="left:5.0px;top:623.00px;font-size:12.38px;line-height:14px;color:#333;">Shanghai</div>
<div class="t" style="left:93.0px;top:623.00px;font-size:12.41px;line-height:14px;color:#333;">SHA-DEV-DT-08</div>
<div class="t" style="left:233.0px;top:623.00px;font-size:12.63px;line-height:14px;color:#333;">Devon</div>
<svg class="i" style="left:353px;top:622px" width="16" height="16"><use href="#arrow"/></svg>
<div class="t" style="left:378.0px;top:623.00px;font-size:12.89px;line-height:14px;color:#333;">Promotion details_0929.docx</div>
<div class="t" style="left:642.0px;top:623.00px;font-size:12.79px;line-height:14px;color:#333;">Document</div>
<svg class="i" style="left:740px;top:619px" width="26" height="22"><use href="#clip"/></svg>
<div class="b" style="left:783px;top:627px;width:6px;height:6px;background:#d83b01;border-radius:50%;"></div>
<div class="t" style="left:793.5px;top:623.00px;font-size:12.21px;line-height:14px;color:#333;">Secret</div>
<div class="t" style="left:868.0px;top:623.00px;font-size:12.0px;line-height:14px;color:#333;">13.4KB</div>
<svg class="i" style="left:957px;top:622px" width="16" height="16"><use href="#edge"/></svg>
<div class="t" style="left:981.0px;top:623.00px;font-size:13.32px;line-height:14px;color:#333;">Microsoft Edge</div>
<div class="t" style="left:966px;width:300px;text-align:right;top:623.00px;font-size:12.6px;line-height:14px;color:#333;">2</div>
<div class="t" style="left:1273.5px;top:623.00px;font-size:12.97px;line-height:14px;color:#333;">09/29/2025 10:03:57 AM</div>
<div class="t" style="left:5.0px;top:650.00px;font-size:12.38px;line-height:14px;color:#333;">Shanghai</div>
<div class="t" style="left:93.0px;top:650.00px;font-size:12.41px;line-height:14px;color:#333;">SHA-DEV-DT-08</div>
<div class="t" style="left:233.0px;top:650.00px;font-size:12.63px;line-height:14px;color:#333;">Devon</div>
<svg class="i" style="left:353px;top:649px" width="16" height="16"><use href="#arrow"/></svg>
<div class="t" style="left:378.0px;top:650.00px;font-size:12.79px;line-height:14px;color:#333;">img_Website.png</div>
<div class="t" style="left:642.0px;top:650.00px;font-size:12.42px;line-height:14px;color:#333;">Graphics</div>
<svg class="i" style="left:740px;top:646px" width="26" height="22"><use href="#clip"/></svg>
<div class="b" style="left:783px;top:654px;width:6px;height:6px;background:#d83b01;border-radius:50%;"></div>
<div class="t" style="left:793.5px;top:650.00px;font-size:12.21px;line-height:14px;color:#333;">Secret</div>
<div class="t" style="left:868.0px;top:650.00px;font-size:12.04px;line-height:14px;color:#333;">626.5KB</div>
<svg class="i" style="left:957px;top:649px" width="16" height="16"><use href="#edge"/></svg>
<div class="t" style="left:981.0px;top:650.00px;font-size:13.32px;line-height:14px;color:#333;">Microsoft Edge</div>
<div class="t" style="left:966px;width:300px;text-align:right;top:650.00px;font-size:12.6px;line-height:14px;color:#333;">0</div>
<div class="t" style="left:1273.5px;top:650.00px;font-size:12.97px;line-height:14px;color:#333;">09/29/2025 10:02:32 AM</div>
<div class="b" style="left:1px;top:671px;width:1448px;height:27px;background:#fafafa;"></div>
<div class="t" style="left:5.0px;top:677.00px;font-size:12.38px;line-height:14px;color:#333;">Shanghai</div>
<div class="t" style="left:93.0px;top:677.00px;font-size:12.41px;line-height:14px;color:#333;">SHA-DEV-DT-08</div>
<div class="t" style="left:233.0px;top:677.00px;font-size:12.63px;line-height:14px;color:#333;">Devon</div>
<svg class="i" style="left:353px;top:676px" width="16" height="16"><use href="#arrow"/></svg>
<div class="t" style="left:378.0px;top:677.00px;font-size:12.79px;line-height:14px;color:#333;">img_Website.png</div>
<div class="t" style="left:642.0px;top:677.00px;font-size:12.42px;line-height:14px;color:#333;">Graphics</div>
<svg class="i" style="left:740px;top:673px" width="26" height="22"><use href="#clip"/></svg>
<div class="b" style="left:783px;top:681px;width:6px;height:6px;background:#d83b01;border-radius:50%;"></div>
<div class="t" style="left:793.5px;top:677.00px;font-size:12.21px;line-height:14px;color:#333;">Secret</div>
<div class="t" style="left:868.0px;top:677.00px;font-size:12.04px;line-height:14px;color:#333;">626.5KB</div>
<svg class="i" style="left:957px;top:676px" width="16" height="16"><use href="#edge"/></svg>
<div class="t" style="left:981.0px;top:677.00px;font-size:13.32px;line-height:14px;color:#333;">Microsoft Edge</div>
<div class="t" style="left:966px;width:300px;text-align:right;top:677.00px;font-size:12.6px;line-height:14px;color:#333;">0</div>
<div class="t" style="left:1273.5px;top:677.00px;font-size:12.97px;line-height:14px;color:#333;">09/29/2025 10:02:32 AM</div>
<div class="t" style="left:5.0px;top:704.00px;font-size:12.38px;line-height:14px;color:#333;">Shanghai</div>
<div class="t" style="left:93.0px;top:704.00px;font-size:12.41px;line-height:14px;color:#333;">SHA-DEV-DT-08</div>
<div class="t" style="left:233.0px;top:704.00px;font-size:12.63px;line-height:14px;color:#333;">Devon</div>
<svg class="i" style="left:353px;top:703px" width="16" height="16"><use href="#arrow"/></svg>
<div class="t" style="left:378.0px;top:704.00px;font-size:12.79px;line-height:14px;color:#333;">img_Website.png</div>
<div class="t" style="left:642.0px;top:704.00px;font-size:12.42px;line-height:14px;color:#333;">Graphics</div>
<svg class="i" style="left:740px;top:700px" width="26" height="22"><use href="#clip"/></svg>
<div class="b" style="left:783px;top:708px;width:6px;height:6px;background:#d83b01;border-radius:50%;"></div>
<div class="t" style="left:793.5px;top:704.00px;font-size:12.21px;line-height:14px;color:#333;">Secret</div>
<div class="t" style="left:868.0px;top:704.00px;font-size:12.04px;line-height:14px;color:#333;">626.5KB</div>
<svg class="i" style="left:957px;top:703px" width="16" height="16"><use href="#edge"/></svg>
<div class="t" style="left:981.0px;top:704.00px;font-size:13.32px;line-height:14px;color:#333;">Microsoft Edge</div>
<div class="t" style="left:966px;width:300px;text-align:right;top:704.00px;font-size:12.6px;line-height:14px;color:#333;">0</div>
<div class="t" style="left:1273.5px;top:704.00px;font-size:12.97px;line-height:14px;color:#333;">09/29/2025 09:57:41 AM</div>
<svg class="i" style="left:3px;top:824px" width="11" height="8" viewBox="0 0 11 8"><rect x="0.5" y="0.5" width="1.2" height="7" fill="#6b6b6b"/><path d="M6 0.5 L2.5 4 L6 7.5Z M10 0.5 L6.5 4 L10 7.5Z" fill="#6b6b6b"/></svg>
<svg class="i" style="left:20px;top:824px" width="9" height="8" viewBox="0 0 9 8"><path d="M4.5 0.5 L1 4 L4.5 7.5Z M8.5 0.5 L5 4 L8.5 7.5Z" fill="#6b6b6b"/></svg>
<svg class="i" style="left:38px;top:824px" width="5" height="8" viewBox="0 0 5 8"><path d="M4 0.5 L0.5 4 L4 7.5Z" fill="#6b6b6b"/></svg>
<svg class="i" style="left:159px;top:824px" width="5" height="8" viewBox="0 0 5 8"><path d="M1 0.5 L4.5 4 L1 7.5Z" fill="#6b6b6b"/></svg>
<svg class="i" style="left:172px;top:824px" width="9" height="8" viewBox="0 0 9 8"><path d="M0.5 0.5 L4 4 L0.5 7.5Z M4.5 0.5 L8 4 L4.5 7.5Z" fill="#6b6b6b"/></svg>
<svg class="i" style="left:187px;top:824px" width="11" height="8" viewBox="0 0 11 8"><path d="M0.5 0.5 L4 4 L0.5 7.5Z M4.5 0.5 L8 4 L4.5 7.5Z" fill="#6b6b6b"/><rect x="8.5" y="0.5" width="1.2" height="7" fill="#6b6b6b"/></svg>
<div class="t" style="left:57.6px;top:822.00px;font-size:13.08px;line-height:14px;color:#333;">Record 3 of 17</div>
<div class="b" style="left:1px;top:839px;width:1448px;height:1px;background:#dcdcdc;"></div>
<svg class="i" style="left:14px;top:853px" width="10" height="10" viewBox="0 0 10 10"><path d="M1 1 L9 9 M9 1 L1 9" stroke="#707070" stroke-width="1.1"/></svg>
<svg class="i" style="left:33px;top:850px" width="14" height="14" viewBox="0 0 14 14"><rect x="0.5" y="0.5" width="13" height="13" fill="#fff" stroke="#8a8a8a" stroke-width="1"/><path d="M3.3 7.2 L5.8 9.7 L10.8 4.3" fill="none" stroke="#333" stroke-width="1.2"/></svg>
<svg class="i" style="left:55px;top:843px" width="4" height="28" viewBox="0 0 4 28"><path d="M3.5 0.5 H0.5 V27.5 H3.5" fill="none" stroke="#9a9a9a" stroke-width="1"/></svg>
<svg class="i" style="left:394px;top:843px" width="4" height="28" viewBox="0 0 4 28"><path d="M0.5 0.5 H3.5 V27.5 H0.5" fill="none" stroke="#9a9a9a" stroke-width="1"/></svg>
<svg class="i" style="left:417px;top:856px" width="8" height="4" viewBox="0 0 8 4"><path d="M0.5 0.5 H7 L3.75 3.5Z" fill="#6b6b6b"/></svg>
<div class="b" style="left:58px;top:846px;width:113px;height:22px;background:#fde6d3;"></div>
<div class="t" style="left:63.4px;top:851.00px;font-size:12.56px;line-height:14px;color:#333;">Leakage channels</div>
<div class="t" style="left:175.5px;top:851.00px;font-size:12.0px;line-height:14px;color:#7a8aa0;">In</div>
<div class="b" style="left:190px;top:846px;width:103px;height:22px;background:#d0e6d6;"></div>
<div class="t" style="left:195.0px;top:851.00px;font-size:13.0px;line-height:14px;color:#333;">Google Chrome</div>
<div class="b" style="left:295px;top:846px;width:100px;height:22px;background:#d0e6d6;"></div>
<div class="t" style="left:300.0px;top:851.00px;font-size:13.32px;line-height:14px;color:#333;">Microsoft Edge</div>
<div class="t" style="left:1381.4px;top:851.00px;font-size:12.57px;line-height:14px;color:#333;">Edit Filter</div>
<div class="b" style="left:0px;top:875px;width:1450px;height:25px;background:#106ebe;"></div>
<div class="t" style="left:9.4px;top:880.00px;font-size:12.31px;line-height:14px;color:#fff;">Ready</div>
<svg class="i" style="left:1185px;top:878px" width="15" height="18" viewBox="0 0 15 18"><path d="M7.5 0.5 V12" stroke="#5ca870" stroke-width="2.2"/><path d="M1.5 6.5 L7.5 12.5 L13.5 6.5" fill="none" stroke="#5ca870" stroke-width="2.2"/><rect x="0.5" y="15" width="14" height="2" fill="#5ca870"/></svg>
<svg class="i" style="left:1291px;top:881px" width="16" height="12" viewBox="0 0 16 12"><rect x="0.5" y="0.5" width="15" height="11" fill="#fff"/><rect x="11" y="2" width="3" height="3" fill="#106ebe"/><path d="M3 6.5 H9 M3 8.8 H11" stroke="#106ebe" stroke-width="1"/></svg>
<div class="t" style="left:1206.7px;top:880.00px;font-size:12.65px;line-height:14px;color:#fff;">Task Center</div>
<div class="t" style="left:1312.5px;top:880.00px;font-size:12.81px;line-height:14px;color:#fff;">569 unread messages</div>
<div class="b" style="left:0;top:0;width:1450px;height:875px;box-sizing:border-box;border:1px solid #1565c0;border-bottom:none;pointer-events:none;"></div>
<svg width="0" height="0" style="position:absolute">
<defs>
<symbol id="arrow" viewBox="0 0 16 16"><path d="M0 6.9 H10.6 L6 2 H9.8 L16 8.5 L9.8 15 H6 L10.6 10.1 H0 Z" fill="#0f78d4"/></symbol>
<symbol id="ban" viewBox="0 0 16 16"><circle cx="8" cy="8" r="7" fill="none" stroke="#d04a26" stroke-width="2"/><path d="M3.3 12.7 L12.7 3.3" stroke="#d04a26" stroke-width="2"/></symbol>
<symbol id="clip" viewBox="0 0 26 22"><g transform="translate(9.79 12.53) rotate(-38)"><path d="M-1.27 -3.5 H9.13 A3.5 3.5 0 0 1 9.13 3.5 H-4.1 A2.15 2.15 0 0 1 -4.1 -0.8 H8 A1.1 1.1 0 0 1 8 1.4 H-0.69" fill="none" stroke="#5f6b7a" stroke-width="1.3"/></g></symbol>
<symbol id="edge" viewBox="0 0 16 16"><linearGradient id="egt" x1="0" y1="0" x2="1" y2="0.4"><stop offset="0" stop-color="#1f9be6"/><stop offset="0.5" stop-color="#2ec1c4"/><stop offset="1" stop-color="#55d85e"/></linearGradient><linearGradient id="egb" x1="0" y1="0" x2="0.6" y2="1"><stop offset="0" stop-color="#1c8ee0"/><stop offset="1" stop-color="#1268c8"/></linearGradient><path d="M1.1 5 A8 8 0 0 1 16 8 V9.6 Q16 10.5 15 10.5 H10 V8.8 Q9.6 6.3 7 5.9 Q3.8 5.8 1.1 5 Z" fill="url(#egt)"/><path d="M1.1 5 Q3.8 5.8 7 5.9 Q4.6 6.6 4.9 9.6 Q5.3 13.2 9 14.6 Q12.4 15.4 14.8 12.3 A8 8 0 0 1 1.1 5 Z" fill="url(#egb)"/><path d="M7.2 6.1 Q5.6 7.5 6.2 10 Q7 12.3 9.8 12.7 Q12.6 13.1 14.8 12.3 Q12.3 15.6 8.8 14.9 Q4.9 13.9 4.8 9.6 Q4.8 7 7.2 6.1 Z" fill="#0b4c9c"/></symbol>
<symbol id="chrome" viewBox="0 0 16 16"><circle cx="8" cy="8" r="8" fill="#e94235"/><path d="M8 8 L1.07 4 A8 8 0 0 0 8 16 Z" fill="#34a853"/><path d="M8 8 L8 16 A8 8 0 0 0 14.93 4 Z" fill="#fbbc04"/><circle cx="8" cy="8" r="3.6" fill="#fff"/><circle cx="8" cy="8" r="2.7" fill="#4285f4"/></symbol>
</defs></svg>
</body></html>
